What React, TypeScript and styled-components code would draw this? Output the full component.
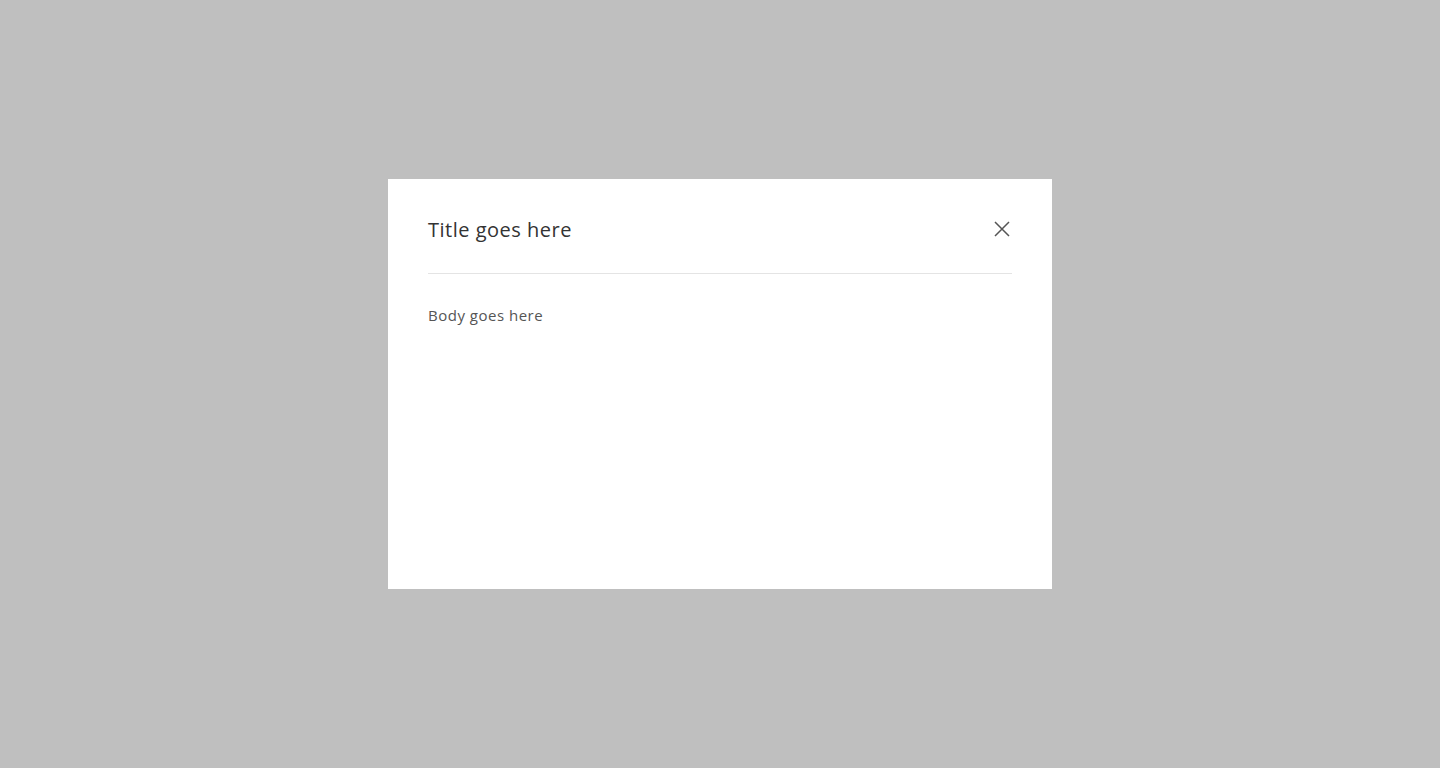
import React from "react";
import styled, { createGlobalStyle } from "styled-components";

const Global = createGlobalStyle`
  html, body { margin: 0; padding: 0; }
  body { font-family: "Open Sans", Lato, sans-serif; }
`;

const Overlay = styled.div`
  width: 100vw;
  height: 100vh;
  background: #bfbfbf;
  display: flex;
  align-items: center;
  justify-content: center;
`;

const Dialog = styled.div`
  width: 664px;
  height: 410px;
  box-sizing: border-box;
  background: #fff;
  padding: 40px 40px;
  display: flex;
  flex-direction: column;
`;

const Header = styled.div`
  display: flex;
  align-items: center;
  justify-content: space-between;
  padding-bottom: 32px;
  border-bottom: 1px solid #e4e4e4;
`;

const Title = styled.h2`
  margin: 0;
  font-size: 20px;
  line-height: 22px;
  font-weight: 400;
  color: #333;
  letter-spacing: 0.5px;
`;

const Close = styled.button`
  border: 0;
  background: none;
  padding: 0;
  width: 20px;
  height: 20px;
  margin-top: -2px;
  display: flex;
  align-items: center;
  justify-content: center;
  cursor: pointer;
`;

const Body = styled.p`
  margin: 31px 0 0;
  font-size: 15px;
  line-height: 20px;
  color: #555;
  letter-spacing: 0.5px;
`;

export default function App() {
  return (
    <>
      <Global />
      <Overlay>
        <Dialog>
          <Header>
            <Title>Title goes here</Title>
            <Close aria-label="Close">
              <svg width="16" height="16" viewBox="0 0 16 16">
                <path d="M1 1L15 15M15 1L1 15" stroke="#555" strokeWidth="1.5" />
              </svg>
            </Close>
          </Header>
          <Body>Body goes here</Body>
        </Dialog>
      </Overlay>
    </>
  );
}
